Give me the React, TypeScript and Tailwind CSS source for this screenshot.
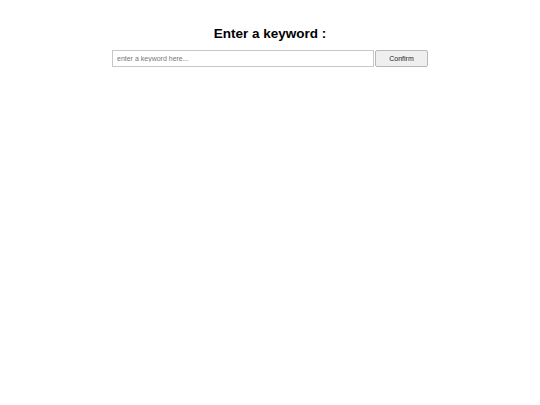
export default function App() {
  return (
    <div className="min-h-screen bg-white font-['Liberation_Sans',Arial,sans-serif] text-black">
      <div className="flex flex-col items-center pt-[25px]">
        <h1 className="text-[13.5px] leading-[18px] font-bold">Enter a keyword :</h1>
        <div className="mt-[7px] flex items-center gap-[1px]">
          <input
            type="text"
            placeholder="enter a keyword here..."
            className="h-[17px] w-[262px] border border-[#c8c8c8] px-[4px] text-[7px] outline-none placeholder:text-[#777]"
          />
          <button className="flex h-[17px] w-[53px] items-center justify-center rounded-[2px] border border-[#b8b8b8] bg-[#efefef] pt-[1px] text-[7px] text-[#222]">
            Confirm
          </button>
        </div>
      </div>
    </div>
  );
}
